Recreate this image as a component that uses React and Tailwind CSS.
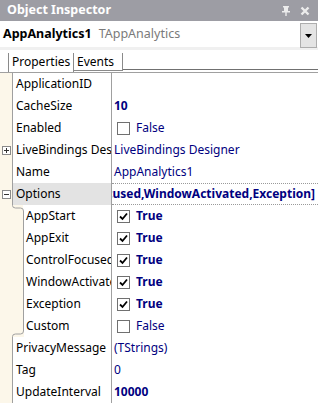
import React from "react";

const FONT = { fontFamily: '"Segoe UI", "Noto Sans", sans-serif' };

function CheckBox({ checked }) {
  return (
    <div className="w-[13px] h-[13px] shrink-0 border border-[#707070] bg-white flex items-center justify-center">
      {checked && (
        <svg width="9" height="9" viewBox="0 0 9 9">
          <path d="M1 4.5 L3.5 7 L8 1.5" fill="none" stroke="#000" strokeWidth="1.8" />
        </svg>
      )}
    </div>
  );
}

function Box({ plus }) {
  return (
    <div className="w-[9px] h-[9px] border border-[#8a8a8a] bg-white flex items-center justify-center">
      <svg width="7" height="7" viewBox="0 0 7 7">
        <path d="M1 3.5 H6" stroke="#333" strokeWidth="1" />
        {plus && <path d="M3.5 1 V6" stroke="#333" strokeWidth="1" />}
      </svg>
    </div>
  );
}

function Row({ kind = "normal", name, nameBg = "", box, children, valueClass = "" }) {
  let gutter;
  if (kind === "normal") {
    gutter = (
      <div className="w-[12px] shrink-0 bg-[#fcf7ea] border-r border-[#a0a0a0] box-content flex items-center justify-center">
        {box}
      </div>
    );
  } else if (kind === "sub") {
    gutter = <div className="w-[23px] shrink-0 bg-[#fcf7ea] border-r border-[#a0a0a0] box-content" />;
  } else if (kind === "subFirst") {
    gutter = (
      <div className="w-[24px] shrink-0 bg-[#fcf7ea]">
        <svg width="24" height="22" viewBox="0 0 24 22">
          <rect x="23" y="0" width="1" height="22" fill="#ffffff" />
          <path d="M12.5 0 V0.5 Q12.5 3 15.5 3 H20.5 Q23.5 3 23.5 6 V22" fill="none" stroke="#a0a0a0" strokeWidth="1" />
        </svg>
      </div>
    );
  } else if (kind === "subLast") {
    gutter = (
      <div className="w-[24px] shrink-0 bg-[#fcf7ea]">
        <svg width="24" height="22" viewBox="0 0 24 22">
          <path d="M23.5 0 V16 Q23.5 19 20.5 19 H15.5 Q12.5 19 12.5 21.5 V22" fill="none" stroke="#a0a0a0" strokeWidth="1" />
        </svg>
      </div>
    );
  }
  const sub = kind !== "normal";
  return (
    <div className="flex h-[22px]">
      <div className="w-[111px] shrink-0 flex">
        {gutter}
        <div
          className={`flex-1 min-w-0 overflow-hidden whitespace-nowrap flex items-center text-black ${sub ? "pl-[2px]" : "pl-[3px]"} ${nameBg}`}
        >
          {name}
        </div>
      </div>
      <div className="w-px shrink-0 bg-[#a0a0a0]" />
      <div className={`flex-1 min-w-0 overflow-hidden whitespace-nowrap flex items-center text-[#000080] ${valueClass}`}>
        {children}
      </div>
    </div>
  );
}

function BoolValue({ checked }) {
  return (
    <div className="flex items-center pl-[5px] gap-[6px]">
      <CheckBox checked={checked} />
      <span className={checked ? "font-bold" : ""}>{checked ? "True" : "False"}</span>
    </div>
  );
}

export default function App() {
  return (
    <div className="w-[318px] h-[405px] bg-white overflow-hidden text-[12px] leading-none select-none" style={FONT}>
      {/* Title bar */}
      <div className="h-[21px] bg-[#9d9da4] flex items-center pl-[7px] pr-[6px]">
        <span className="text-white font-bold text-[12.5px]">Object Inspector</span>
        <div className="flex-1" />
        <svg width="10" height="10" viewBox="0 0 10 10" className="mr-[9px]">
          <rect x="2" y="0" width="6" height="1.5" fill="#ececec" />
          <rect x="3" y="1" width="4" height="4" fill="#ececec" />
          <rect x="1" y="5" width="8" height="1.5" fill="#ececec" />
          <rect x="4.3" y="6" width="1.4" height="4" fill="#ececec" />
        </svg>
        <svg width="10" height="10" viewBox="0 0 10 10" className="mr-[2px]">
          <path d="M1.5 1.5 L8.5 8.5 M8.5 1.5 L1.5 8.5" stroke="#ececec" strokeWidth="2.4" />
        </svg>
      </div>

      {/* Combo */}
      <div className="h-[26px] flex items-start bg-white">
        <div className="flex-1 h-full flex items-center pl-[3px] whitespace-nowrap overflow-hidden">
          <span className="font-bold text-black text-[12.5px]">AppAnalytics1</span>
          <span className="text-[#7a7a7a] text-[12.5px] ml-[7px]">TAppAnalytics</span>
        </div>
        <div className="w-[17px] h-[25px] mt-[2px] mr-px bg-[#e4e4e4] border border-[#adadad] flex items-center justify-center">
          <svg width="7" height="4" viewBox="0 0 7 4">
            <path d="M0 0 H7 L3.5 4 Z" fill="#000" />
          </svg>
        </div>
      </div>
      <div className="h-[3px] bg-[#f0f0f0]" />

      {/* Tabs */}
      <div className="h-[22px] flex bg-white text-[12px]">
        <div className="w-[8px] shrink-0" />
        <div className="w-[66px] shrink-0 mt-[3px] border-l border-r border-[#8a8a8a] flex items-center pl-[3px] pb-[2px] text-black">
          Properties
        </div>
        <div className="w-[45px] shrink-0 mt-[3px] h-[17px] border-r border-b border-[#8a8a8a] flex items-center pl-[3px] box-content text-black">
          Events
        </div>
        <div className="flex-1 h-[20px] border-b border-[#707070]" />
      </div>

      {/* Grid */}
      <div className="border-t border-[#a0a0a0]">
        <Row name="ApplicationID" />
        <Row name="CacheSize" valueClass="pl-[2px] font-bold">10</Row>
        <Row name="Enabled">
          <BoolValue checked={false} />
        </Row>
        <Row name="LiveBindings Designer" box={<Box plus />} valueClass="pl-[2px]">
          LiveBindings Designer
        </Row>
        <Row name="Name" valueClass="pl-[2px]">AppAnalytics1</Row>
        <Row name="Options" nameBg="bg-[#e3e3e3]" box={<Box />} valueClass="justify-end pr-[3px] font-bold border-y border-dotted border-[#9a9a9a]">
          [AppStart,AppExit,ControlFocused,WindowActivated,Exception]
        </Row>
        <Row kind="subFirst" name="AppStart">
          <BoolValue checked />
        </Row>
        <Row kind="sub" name="AppExit">
          <BoolValue checked />
        </Row>
        <Row kind="sub" name="ControlFocused">
          <BoolValue checked />
        </Row>
        <Row kind="sub" name="WindowActivated">
          <BoolValue checked />
        </Row>
        <Row kind="sub" name="Exception">
          <BoolValue checked />
        </Row>
        <Row kind="subLast" name="Custom">
          <BoolValue checked={false} />
        </Row>
        <Row name="PrivacyMessage" valueClass="pl-[2px]">(TStrings)</Row>
        <Row name="Tag" valueClass="pl-[2px]">0</Row>
        <Row name="UpdateInterval" valueClass="pl-[2px] font-bold">10000</Row>
      </div>
    </div>
  );
}
